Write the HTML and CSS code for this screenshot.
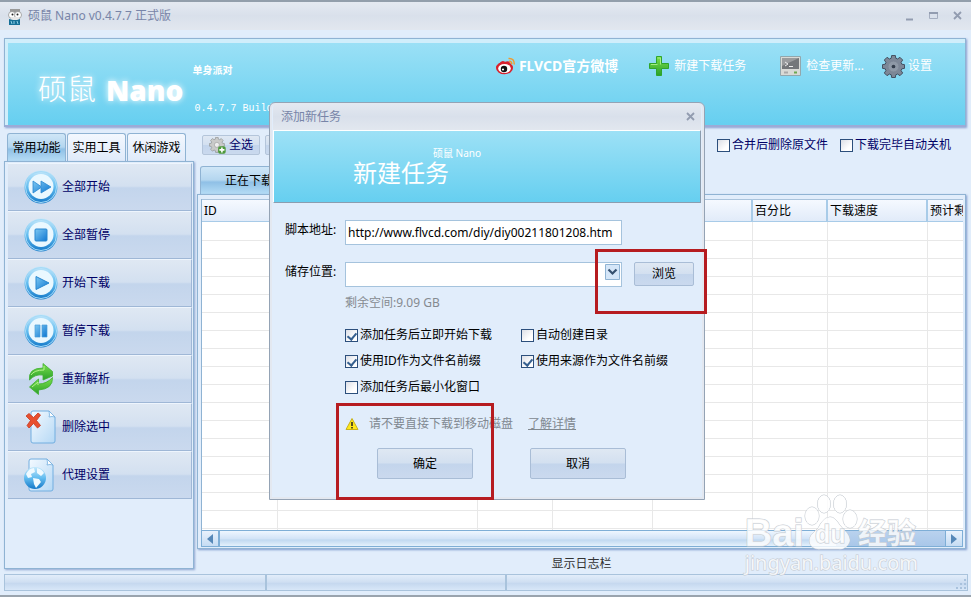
FILE: index.html
```html
<!DOCTYPE html>
<html lang="zh-CN">
<head>
    <meta charset="UTF-8">
    <meta name="viewport" content="width=device-width, initial-scale=1.0">
    <title>硕鼠 Nano v0.4.7.7 正式版</title>
    <link rel="stylesheet" href="styles.css">
</head>
<body>
    <!-- Shared gradients and shapes -->
    <svg class="defs" width="0" height="0" aria-hidden="true">
        <defs>
            <linearGradient id="ring" x1="0" y1="0" x2="0" y2="1">
                <stop offset="0" stop-color="#c4e8fb"/>
                <stop offset="0.5" stop-color="#63bdf0"/>
                <stop offset="1" stop-color="#1478c8"/>
            </linearGradient>
            <linearGradient id="glyph" x1="0" y1="0" x2="1" y2="1">
                <stop offset="0" stop-color="#7cc8f2"/>
                <stop offset="1" stop-color="#0f77d2"/>
            </linearGradient>
            <linearGradient id="green" x1="0" y1="0" x2="0" y2="1">
                <stop offset="0" stop-color="#7be04c"/>
                <stop offset="1" stop-color="#2aa02a"/>
            </linearGradient>
            <linearGradient id="paper" x1="0" y1="0" x2="1" y2="1">
                <stop offset="0" stop-color="#f4faff"/>
                <stop offset="1" stop-color="#b5d8f5"/>
            </linearGradient>
            <g id="disc">
                <circle cx="17" cy="17" r="16.5" fill="url(#ring)"/>
                <circle cx="17" cy="17" r="15.5" fill="none" stroke="#a5daf7" stroke-width="1"/>
                <circle cx="17" cy="16.5" r="12.5" fill="#eaf8ff"/>
            </g>
            <g id="cog">
                <path d="M10 0h4l.5 3 2 .8L19 2l3 3-1.800 2.500.8 2 3 .5v4l-3 .5-.8 2L22 19l-3 3-2.500-1.800-2 .8-.5 3h-4l-.5-3-2-.8L5 22l-3-3 1.800-2.500-.8-2L0 14v-4l3-.5.8-2L2 5l3-3 2.500 1.800 2-.8z"/>
            </g>
        </defs>
    </svg>

    <header class="titlebar">
        <svg class="app-icon" width="14" height="17" viewBox="0 0 14 17">
            <path d="M2 1h10v3H2z" fill="#999"/>
            <circle cx="4" cy="7" r="3.500" fill="#fff" stroke="#888" stroke-width="0.700"/>
            <circle cx="10" cy="7" r="3.500" fill="#fff" stroke="#888" stroke-width="0.700"/>
            <circle cx="4.500" cy="6.500" r="1" fill="#222"/>
            <circle cx="9.500" cy="6.500" r="1" fill="#222"/>
            <path d="M3 9h8v3H3z" fill="#e8e8e8"/>
            <path d="M1 11l4 1h4l3-1v6H1z" fill="#176f96"/>
            <path d="M3 13l1 3M6 13v3M9 13l1 3" stroke="#8fd0e6"/>
        </svg>
        <h1>硕鼠 Nano v0.4.7.7 正式版</h1>
        <div class="window-controls">
            <button aria-label="最小化"><svg width="10" height="10"><path d="M1 8.500h7" stroke="#929cb0" stroke-width="2"/></svg></button>
            <button aria-label="最大化"><svg width="10" height="10"><path d="M.5 1.500h8v6h-8z" fill="none" stroke="#a5aec0"/><path d="M0 2h9" stroke="#929cb0" stroke-width="2"/></svg></button>
            <button aria-label="关闭"><svg width="10" height="10"><path d="M1 1l7 7M8 1l-7 7" stroke="#929cb0" stroke-width="1.800"/></svg></button>
        </div>
    </header>

    <section class="banner">
        <div class="logo">
            <span class="logo-cn">硕鼠</span>
            <span class="logo-en">Nano</span>
            <div class="logo-info">
                <strong>单身派对</strong>
                <span class="build">0.4.7.7 Build</span>
            </div>
        </div>
        <nav class="banner-links">
            <a href="#" class="weibo">
                <svg width="20" height="18" viewBox="0 0 20 18">
                    <ellipse cx="8.500" cy="11" rx="8.500" ry="6.300" fill="#d8202c"/>
                    <path d="M3 7q3-5 6-2q5-2 5 2" fill="#d8202c"/>
                    <ellipse cx="8.500" cy="11.500" rx="6.300" ry="4.500" fill="#fff"/>
                    <circle cx="8" cy="12" r="3.200" fill="#111"/>
                    <circle cx="7" cy="12.500" r="1.100" fill="#fff"/>
                    <path d="M12.500 1.500q6-.5 5.800 6M13 4.200q3 0 2.800 3" fill="none" stroke="#f39a2d" stroke-width="1.500"/>
                </svg>
                FLVCD官方微博
            </a>
            <a href="#" class="new-task">
                <svg width="20" height="20" viewBox="0 0 20 20"><path d="M7.500 .5h5V7.500h7v5h-7v7h-5v-7h-7v-5h7z" fill="url(#green)" stroke="#2fa52b"/><path d="M8.500 2h3v6.500M2 8.500h6.500" stroke="#a4ed80" fill="none"/></svg>
                新建下载任务
            </a>
            <a href="#" class="update">
                <svg width="21" height="20" viewBox="0 0 21 20">
                    <path d="M.5.5h20v19H.5z" fill="#d9dad6" stroke="#92a7ad"/>
                    <path d="M2 2h17v11H2z" fill="#74777a"/>
                    <path d="M2 2h17L2 10z" fill="#9a9c9e"/>
                    <path d="M5 6l3 2-3 2M9 10.500h4" stroke="#eee" fill="none"/>
                    <path d="M4 15.500h4v2H4z" fill="#aaa"/><path d="M14 15.500h3v2h-3z" fill="#6da850"/>
                </svg>
                检查更新...
            </a>
            <a href="#" class="settings">
                <svg width="23" height="23" viewBox="-.5 -.5 25 25"><use href="#cog" fill="#7d8797" stroke="#3d4757"/><circle cx="12" cy="12" r="6" fill="#8e98a6" stroke="#7a8494"/><circle cx="12" cy="12" r="2" fill="#333d4c"/></svg>
                设置
            </a>
        </nav>
    </section>

    <main>
        <aside class="sidebar">
            <div class="side-tabs">
                <button class="active">常用功能</button>
                <button>实用工具</button>
                <button>休闲游戏</button>
            </div>
            <div class="side-panel">
                <button class="side-item">
                    <svg width="34" height="34"><use href="#disc"/><path d="M9 11l8 5.500V11l10 6-10 6v-5.500L9 23z" fill="url(#glyph)" stroke="#2887d0" stroke-width="0.800" stroke-linejoin="round"/></svg>
                    全部开始
                </button>
                <button class="side-item">
                    <svg width="34" height="34"><use href="#disc"/><rect x="11" y="11" width="12" height="12" rx="1" fill="url(#glyph)" stroke="#2887d0"/></svg>
                    全部暂停
                </button>
                <button class="side-item">
                    <svg width="34" height="34"><use href="#disc"/><path d="M12 10.500l13 6.500-13 6.500z" fill="url(#glyph)" stroke="#2887d0" stroke-linejoin="round"/></svg>
                    开始下载
                </button>
                <button class="side-item">
                    <svg width="34" height="34"><use href="#disc"/><path d="M11 11h5v12h-5zM18 11h5v12h-5z" fill="url(#glyph)" stroke="#4b9ed8" stroke-width="0.700"/></svg>
                    暂停下载
                </button>
                <button class="side-item">
                    <svg width="34" height="34">
                        <path d="M5.500 18Q4 6 19 6V1.500l9.500 8V14L19 18v-5q-8-1-13.500 5z" fill="url(#green)" stroke="#3fae2e" stroke-width="0.800"/>
                        <path d="M28.500 15.500Q29 27 14.500 28v4.500L5.500 25l9-8v5q8 0 14-6.500z" fill="url(#green)" stroke="#3fae2e" stroke-width="0.800"/>
                        <path d="M7 13q3-5 13-5V4M8 25l6-5v3" fill="none" stroke="#b4f28c"/>
                    </svg>
                    重新解析
                </button>
                <button class="side-item">
                    <svg width="34" height="34">
                        <path d="M9 1h16l6 6v24q0 2-2 2H9q-2 0-2-2V3q0-2 2-2z" fill="url(#paper)" stroke="#72aee0"/>
                        <path d="M25 1q1 5 0 6 3-1 6 0z" fill="#fff" stroke="#72aee0" stroke-width="0.800"/>
                        <path d="M2 6l3-2.500 4.500 4L14 3l2.500 2-4 5.500 4 5-3 2.500-4-4.500L5 18l-2-2.500 3.500-5z" fill="#e8502f" stroke="#c53820" stroke-width="0.800"/>
                    </svg>
                    删除选中
                </button>
                <button class="side-item">
                    <svg width="34" height="34">
                        <path d="M7 1h16l6 6v24q0 2-2 2H7q-2 0-2-2V3q0-2 2-2z" fill="url(#paper)" stroke="#72aee0"/>
                        <path d="M23 1q1 5 0 6 3-1 6 0z" fill="#fff" stroke="#72aee0" stroke-width="0.800"/>
                        <circle cx="11" cy="20" r="11" fill="url(#ring)"/>
                        <path d="M2 16q3-6 8-6l1 4-4 2 1 3-4 1zM13 10q5 1 7 5l-3 3-4-3zM9 20l6 1 2 3-5 6-2-4z" fill="#f0faff"/>
                    </svg>
                    代理设置
                </button>
            </div>
        </aside>

        <section class="content">
            <div class="toolbar">
                <button class="tool-btn">
                    <svg width="17" height="17" viewBox="-.5 -.5 27 27"><use href="#cog" fill="#c9cac9" stroke="#8b8e8c"/><circle cx="12" cy="12" r="4" fill="#eee" stroke="#999"/><rect x="14" y="14" width="12" height="12" rx="3" fill="#4f9a3d"/><path d="M20 16v8M16 20h8" stroke="#fff" stroke-width="2.500"/></svg>
                    全选
                </button>
                <button class="tool-btn">反选</button>
                <div class="toolbar-options">
                    <label><input type="checkbox">合并后删除原文件</label>
                    <label><input type="checkbox">下载完毕自动关机</label>
                </div>
            </div>
            <div class="list-tabs">
                <button class="active">正在下载</button>
            </div>
            <div class="list-panel">
                <div class="table-wrap">
                    <table>
                        <colgroup>
                            <col class="w-id"><col class="w-name"><col class="w-s"><col class="w-m">
                            <col class="w-m"><col class="w-s"><col class="w-m"><col class="w-m">
                        </colgroup>
                        <thead>
                            <tr><th>ID</th><th></th><th></th><th></th><th></th><th>百分比</th><th>下载速度</th><th>预计剩余</th></tr>
                        </thead>
                        <tbody>
                            <tr><td></td><td></td><td></td><td></td><td></td><td></td><td></td><td></td></tr>
                        </tbody>
                    </table>
                </div>
                <div class="scrollbar">
                    <button aria-label="向左滚动"><svg width="6" height="10"><path d="M6 0v10L0 5z" fill="#5688b8"/></svg></button>
                    <div class="track"><div class="thumb"></div></div>
                    <button aria-label="向右滚动"><svg width="6" height="10"><path d="M0 0v10l6-5z" fill="#5688b8"/></svg></button>
                </div>
            </div>
            <button class="log-toggle">显示日志栏</button>
        </section>
    </main>

    <footer class="statusbar">
        <span></span><span></span><span></span>
        <svg class="grip" width="12" height="12"><path d="M9 1h2v2H9zM5 5h2v2H5zM9 5h2v2H9zM1 9h2v2H1zM5 9h2v2H5zM9 9h2v2H9z" fill="#a9c2dd"/></svg>
    </footer>

    <!-- New task dialog -->
    <div class="overlay">
        <form class="dialog">
            <div class="dialog-title">
                <span>添加新任务</span>
                <button type="button" aria-label="关闭"><svg width="10" height="10"><path d="M1 1l7 7M8 1l-7 7" stroke="#929cb0" stroke-width="1.800"/></svg></button>
            </div>
            <div class="dialog-banner">
                <small>硕鼠 Nano</small>
                <h2>新建任务</h2>
            </div>
            <div class="dialog-body">
                <div class="form-row">
                    <label for="scriptUrl">脚本地址:</label>
                    <input type="text" id="scriptUrl" value="http://www.flvcd.com/diy/diy00211801208.htm">
                </div>
                <div class="form-row">
                    <label for="savePath">储存位置:</label>
                    <div class="select-box">
                        <select id="savePath"><option value=""></option></select>
                        <svg class="arrow" width="15" height="16"><path d="M.5.5h14v15H.5z" fill="#d5e6f8" stroke="#8fb3d3"/><path d="M3.500 5.500l4 4 4-4" fill="none" stroke="#35506f" stroke-width="2.200"/></svg>
                    </div>
                    <button type="button" class="btn btn-browse">浏览</button>
                </div>
                <p class="free-space">剩余空间:9.09 GB</p>
                <div class="options">
                    <label><input type="checkbox" checked>添加任务后立即开始下载</label>
                    <label><input type="checkbox">自动创建目录</label>
                    <label><input type="checkbox" checked>使用ID作为文件名前缀</label>
                    <label><input type="checkbox" checked>使用来源作为文件名前缀</label>
                    <label><input type="checkbox">添加任务后最小化窗口</label>
                </div>
                <p class="warning">
                    <svg width="14" height="14"><path d="M7 1.500l6 11H1z" fill="#ffe81a" stroke="#c9b21a" stroke-linejoin="round"/><path d="M7 5v4M7 10v1.500" stroke="#222" stroke-width="1.500"/></svg>
                    <span>请不要直接下载到移动磁盘</span>
                    <a href="#">了解详情</a>
                </p>
                <div class="actions">
                    <button type="submit" class="btn">确定</button>
                    <button type="button" class="btn">取消</button>
                </div>
            </div>
            <div class="mark mark-browse"></div>
            <div class="mark mark-confirm"></div>
        </form>
    </div>

    <div class="watermark">
        <div class="wm-top">
            <span class="wm-bai">Bai</span>
            <span class="wm-paw">
                <svg width="54" height="56">
                    <g fill="#fff" fill-opacity="0.800" stroke="#c3c9d0">
                        <ellipse cx="8" cy="22" rx="7" ry="9"/>
                        <ellipse cx="20" cy="10" rx="6.500" ry="9"/>
                        <ellipse cx="36" cy="10" rx="6.500" ry="9"/>
                        <ellipse cx="46" cy="25" rx="7" ry="9"/>
                        <path d="M26 23q5 0 9 7 3 4 8 9 5 7 1 12-4 5-10 4H17q-8 1-11-5-2-7 4-12 5-4 7-9 4-6 9-6z"/>
                    </g>
                </svg>
                <b>du</b>
            </span>
            <span class="wm-cn">经验</span>
        </div>
        <div class="wm-url">jingyan.baidu.com</div>
    </div>
</body>
</html>
```
FILE: styles.css
```css
/* Base Styles */
:root {
    --bg: #e1edfb;
    --line: #8fb3d3;
    --navy: #000066;
    --title: #7885a8;
    --sky: linear-gradient(#9de1f6, #66cff0);
    --button: linear-gradient(#dfe8f3, #d3e0f0 48%, #c3d5ec 52%, #cad9ee);
}

* {
    margin: 0;
    padding: 0;
    box-sizing: border-box;
}

body {
    min-height: 100vh;
    display: flex;
    flex-direction: column;
    position: relative;
    overflow: hidden;
    background: var(--bg);
    border-top: 2px solid #929eab;
    border-bottom: 2px solid #9aa4ae;
    font-family: "Noto Sans", "Noto Sans CJK SC", sans-serif;
    font-size: 12px;
    line-height: 18px;
    color: #000;
}

button,
input,
select {
    font: inherit;
    color: inherit;
}

button {
    border: none;
    background: none;
    white-space: nowrap;
}

svg {
    display: block;
    flex-shrink: 0;
}

.defs {
    position: absolute;
}

/* Title bar */
.titlebar {
    display: flex;
    align-items: center;
    gap: 6px;
    height: 28px;
    padding: 0 8px;
    margin-bottom: 8px;
    background: linear-gradient(#e4e9f1, #d9e0eb 50%, #e2e7ef);
    color: var(--title);
}

.titlebar h1 {
    flex: 1;
    font-size: 12px;
    font-weight: normal;
}

.window-controls {
    display: flex;
    gap: 14px;
}

/* Banner */
.banner {
    display: flex;
    justify-content: space-between;
    height: 89px;
    margin: 0 5px 6px 4px;
    border: 1px solid var(--line);
    border-bottom: 2px solid #9cabd6;
    background: var(--sky);
    box-shadow: inset 3px 4px #d0eefb, 1px 1px 2px #8a9fd0;
    color: #fff;
}

.logo {
    display: flex;
    padding-left: 33px;
    line-height: 40px;
    white-space: nowrap;
    text-shadow: 0 0 6px #fff;
}

.logo-cn {
    padding-top: 28px;
    margin-right: 10px;
    font-family: "Noto Sans CJK SC", sans-serif;
    font-size: 29px;
    font-weight: 300;
}

.logo-en {
    padding-top: 31px;
    margin-right: 9px;
    font-family: "Open Sans", sans-serif;
    font-size: 28px;
    font-weight: 800;
}

.logo-info {
    display: flex;
    flex-direction: column;
    gap: 21px;
    padding-top: 22px;
    font-size: 10px;
    line-height: 18px;
    text-shadow: none;
}

.build {
    padding-left: 2px;
    font-family: "Liberation Mono", monospace;
}

.banner-links {
    display: flex;
    align-items: center;
    height: 24px;
    margin: 15px 33px 0 0;
}

.banner-links a {
    display: flex;
    align-items: center;
    gap: 5px;
    color: #fff;
    text-decoration: none;
    white-space: nowrap;
}

.banner-links .weibo {
    margin-right: 31px;
    gap: 3px;
    font-size: 14px;
    font-weight: bold;
}

.banner-links .new-task {
    margin-right: 34px;
}

.banner-links .update {
    margin-right: 18px;
}

.banner-links .settings {
    gap: 3px;
}

/* Main Content */
main {
    flex: 1;
    display: flex;
    gap: 3px;
    padding: 0 5px 0 4px;
}

.sidebar {
    width: 190px;
    display: flex;
    flex-direction: column;
    padding-bottom: 5px;
}

.side-tabs {
    display: flex;
    gap: 1px;
    padding-left: 3px;
}

.side-tabs button {
    width: 59px;
    height: 28px;
    border: 1px solid var(--line);
    border-bottom: none;
    border-radius: 3px 3px 0 0;
    background: linear-gradient(#f3f8fe, #dfeafa);
}

.side-tabs .active,
.list-tabs .active {
    background: linear-gradient(#cfe6f7, #b4d6ef 48%, #8fc0e6 56%, #b5dcf5);
}

.side-panel {
    flex: 1;
    padding: 1px 1px 0 3px;
    border: 1px solid var(--line);
    box-shadow: 1px 1px 2px #8fa6d0;
}

.side-item {
    display: flex;
    align-items: center;
    gap: 4px;
    width: 100%;
    height: 48px;
    padding-left: 16px;
    border-top: 1px solid #eef5fd;
    border-right: 1px solid #9fb7d6;
    border-bottom: 1px solid #9fb7d6;
    background: var(--button);
    color: var(--navy);
}

.content {
    flex: 1;
    min-width: 0;
    display: flex;
    flex-direction: column;
}

.toolbar {
    display: flex;
    align-items: center;
    gap: 5px;
    height: 24px;
    padding-left: 5px;
    margin-bottom: 9px;
    color: var(--navy);
}

.tool-btn {
    display: flex;
    align-items: center;
    gap: 3px;
    height: 20px;
    padding: 0 6px;
    border: 1px solid #b4c5da;
    border-radius: 2px;
    background: var(--button);
}

.toolbar-options {
    display: flex;
    gap: 12px;
    margin-left: auto;
    padding-right: 15px;
}

/* Check boxes */
label {
    display: flex;
    align-items: center;
    gap: 2px;
    white-space: nowrap;
}

input[type="checkbox"] {
    appearance: none;
    position: relative;
    width: 13px;
    height: 13px;
    border: 1px solid #2c4f7c;
    background: linear-gradient(135deg, #dcdfe6, #fff 70%);
}

input[type="checkbox"]:checked::after {
    content: "";
    position: absolute;
    left: 3px;
    top: 1px;
    width: 4px;
    height: 7px;
    border: solid #36608f;
    border-width: 0 2px 2px 0;
    transform: rotate(40deg);
}

/* Download list */
.list-tabs {
    padding-left: 3px;
}

.list-tabs button {
    width: 98px;
    height: 28px;
    border: 1px solid var(--line);
    border-bottom: none;
    border-radius: 3px 3px 0 0;
}

.list-panel {
    flex: 1;
    display: flex;
    flex-direction: column;
    padding: 4px 2px 1px 3px;
    border: 1px solid var(--line);
    box-shadow: 1px 1px 2px #7f9bcd;
}

.table-wrap {
    flex: 1;
    display: flex;
    overflow: hidden;
    border-left: 1px solid var(--line);
    background: #fff repeating-linear-gradient(#fff 0 17px, #e8e8e8 17px 18px) 0 24px;
}

table {
    flex-shrink: 0;
    width: 826px;
    table-layout: fixed;
    border-collapse: separate;
    border-spacing: 0;
}

.w-id { width: 76px; }
.w-name { width: 200px; }
.w-s { width: 75px; }
.w-m { width: 100px; }

th {
    height: 23px;
    padding-left: 2px;
    border-top: 1px solid #a9c3dc;
    border-right: 2px solid #a8cbe8;
    border-bottom: 1px solid #a8cbe8;
    background: linear-gradient(#f5f9ff, #e1ebf9);
    font-weight: normal;
    text-align: left;
    white-space: nowrap;
}

td {
    border-right: 1px solid #e8e8e8;
}

/* Scrollbar */
.scrollbar {
    display: flex;
    height: 17px;
    border: 1px solid #7eaed6;
}

.scrollbar button {
    display: flex;
    align-items: center;
    justify-content: center;
    width: 16px;
    background: linear-gradient(#e8f2fd, #c6dcf3);
}

.track {
    flex: 1;
    border: solid #7eaed6;
    border-width: 0 1px 0 2px;
    background: linear-gradient(#b9d2ee, #a9c7e9);
}

.thumb {
    width: 85%;
    height: 100%;
    background: linear-gradient(#eef6ff, #d3e4f7 50%, #c1d9f1 60%, #e4f1fc);
}

.log-toggle {
    height: 25px;
    padding-top: 4px;
    color: #333;
}

/* Status bar */
.statusbar {
    display: flex;
    align-items: flex-end;
    height: 17px;
    margin: 0 3px 4px 4px;
    border: 1px solid #a9c3dc;
    background: linear-gradient(#e2edfa, #cfdff2 48%, #c5d8ef 55%, #d8e7f8);
}

.statusbar span {
    width: 262px;
    height: 100%;
    border-right: 2px solid #a9c3dc;
}

.statusbar span + span {
    width: 240px;
}

.statusbar span:nth-child(3) {
    flex: 1;
    border: none;
}

/* Dialog */
.overlay {
    position: absolute;
    inset: 0;
    display: flex;
    justify-content: center;
    align-items: flex-start;
    padding: 100px 0 0 3px;
}

.dialog {
    position: relative;
    width: 436px;
    padding: 0 3px 20px;
    border: 1px solid #94a3b5;
    border-radius: 6px 6px 0 0;
    background: var(--bg);
    box-shadow: inset 0 0 0 2px #e3e8f0;
}

.dialog-title {
    display: flex;
    align-items: center;
    justify-content: space-between;
    height: 27px;
    padding: 0 5px 0 8px;
    background: linear-gradient(#e4e9f1, #d9e0eb 50%, #e2e7ef);
    border-radius: 5px 5px 0 0;
    color: var(--title);
}

.dialog-banner {
    height: 73px;
    padding: 14px 0 0 79px;
    border: 1px solid #fff;
    border-right-color: #8b9daf;
    border-bottom-color: #8b9daf;
    background: var(--sky);
    color: #fff;
}

.dialog-banner small {
    display: block;
    padding-left: 80px;
    font-size: 10px;
    line-height: 16px;
}

.dialog-banner h2 {
    font-size: 24px;
    font-weight: normal;
    line-height: 24px;
}

.dialog-body {
    padding: 17px 8px 0 12px;
}

.form-row {
    display: grid;
    grid-template-columns: 60px 277px 60px;
    align-items: start;
    margin-bottom: 17px;
}

.form-row label {
    line-height: 20px;
}

.form-row input,
.select-box {
    width: 100%;
    height: 25px;
    padding: 0 2px;
    border: 1px solid #a5c3dd;
    background: #fff;
}

.select-box {
    position: relative;
}

.select-box select {
    appearance: none;
    width: 100%;
    height: 23px;
    border: none;
    background: none;
}

.arrow {
    position: absolute;
    top: 1px;
    right: 1px;
    pointer-events: none;
}

.btn {
    height: 31px;
    border: 1px solid #a9bdd6;
    border-radius: 2px;
    background: var(--button);
}

.btn-browse {
    height: 24px;
    margin-left: 12px;
    width: 60px;
}

.free-space {
    padding-left: 60px;
    margin: -10px 0 10px;
    color: #858a90;
}

.options {
    display: grid;
    grid-template-columns: 176px 1fr;
    grid-auto-rows: 26px;
    padding-left: 60px;
    margin-bottom: 15px;
}

.warning {
    display: flex;
    align-items: center;
    padding-left: 60px;
    margin-bottom: 15px;
    color: #808890;
}

.warning span {
    margin: 0 15px 0 10px;
}

.warning a {
    color: #808890;
}

.actions {
    display: flex;
    gap: 57px;
    padding-left: 92px;
}

.actions .btn {
    width: 96px;
}

/* Highlight frames */
.mark {
    position: absolute;
    border: 3px solid #b61c20;
    pointer-events: none;
}

.mark-browse {
    top: 146px;
    right: -3px;
    width: 112px;
    height: 65px;
}

.mark-confirm {
    bottom: -1px;
    left: 66px;
    width: 158px;
    height: 97px;
}

/* Watermark */
.watermark {
    position: absolute;
    right: 53px;
    bottom: 19px;
    color: rgba(255, 255, 255, 0.8);
    -webkit-text-stroke: 1px #c3c9d0;
    paint-order: stroke fill;
    pointer-events: none;
}

.wm-top {
    display: flex;
    align-items: flex-end;
    height: 57px;
    margin-bottom: 3px;
    line-height: 34px;
}

.wm-bai {
    font-family: "Liberation Sans", sans-serif;
    font-size: 38px;
    font-weight: bold;
}

.wm-paw {
    position: relative;
}

.wm-paw b {
    position: absolute;
    left: 11px;
    bottom: -1px;
    font-family: "Liberation Sans", sans-serif;
    font-size: 25px;
}

.wm-cn {
    font-size: 29px;
    font-weight: bold;
}

.wm-url {
    font-size: 20px;
    line-height: 20px;
    margin-bottom: 3px;
}
```
